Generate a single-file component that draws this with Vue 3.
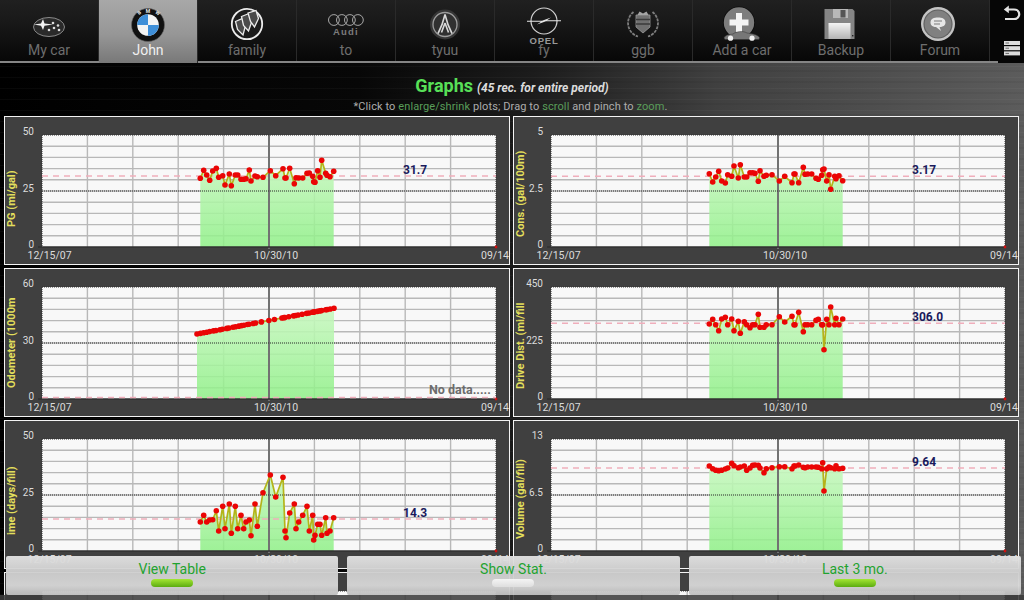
<template>
  <div class="page">
    <div class="topbar">
      <div class="tabs">
        <div v-for="t in tabs" :key="t.id" class="tab" :class="{ active: t.active }">
          <svg class="logo" viewBox="0 0 48 42" width="48" height="42">
            <template v-if="t.id === 'subaru'">
              <ellipse cx="24" cy="27" rx="15.5" ry="9.5" fill="#2a2a2a" stroke="#8a8a8a" stroke-width="1" />
              <path d="M9 24.5 L16 23.5 L18 19 L19.5 23.5 L28 24.5 L19.5 25.8 L18 30 L16 25.8 Z" fill="#f2f2f2" />
              <circle v-for="s in subaruStars" :key="s[0]" :cx="s[0]" :cy="s[1]" r="1.3" fill="#ddd" />
            </template>
            <template v-else-if="t.id === 'bmw'">
              <circle cx="24" cy="25" r="16.5" fill="#111" stroke="#666" stroke-width="0.6" />
              <circle cx="24" cy="25" r="10.8" fill="#f4f4f4" />
              <path d="M24 25 V14.2 A10.8 10.8 0 0 0 13.2 25 Z M24 25 V35.8 A10.8 10.8 0 0 0 34.8 25 Z" fill="#3f8fd8" />
              <text class="bmw" x="15" y="15" transform="rotate(-38 15 15)">B</text>
              <text class="bmw" x="24" y="12.6" text-anchor="middle">M</text>
              <text class="bmw" x="31" y="13" transform="rotate(38 31 13)">W</text>
            </template>
            <template v-else-if="t.id === 'buick'">
              <circle cx="24" cy="24" r="15.2" fill="#1c1c1c" stroke="#ececec" stroke-width="1.8" />
              <path d="M12.5 21.5 L19.5 18.5 L22 27.5 L20 35 L14.5 29.5 Z" fill="#4a4a4a" stroke="#ececec" stroke-width="1.3" />
              <path d="M18.5 16.5 L26 13.5 L28.5 22.5 L25.5 31 L20.5 25.5 Z" fill="#4a4a4a" stroke="#ececec" stroke-width="1.3" />
              <path d="M25 13 L33 10.5 L35.5 18.5 L31.5 27 L27.5 21.5 Z" fill="#4a4a4a" stroke="#ececec" stroke-width="1.3" />
            </template>
            <template v-else-if="t.id === 'audi'">
              <circle v-for="c in [11.9, 19.9, 27.9, 35.9]" :key="c" :cx="c" cy="20" r="5.4" fill="none" stroke="#a8a8a8" stroke-width="1" />
              <text class="audi" x="24" y="35" text-anchor="middle">Audi</text>
            </template>
            <template v-else-if="t.id === 'acura'">
              <circle cx="24" cy="24.5" r="15" fill="#363636" />
              <circle cx="24" cy="24.5" r="12" fill="#303030" stroke="#9c9c9c" stroke-width="1.3" />
              <path d="M24 14.5 C22.5 21 20 28 17 33.5 M24 14.5 C25.5 21 28 28 31 33.5 M24 23 L20.5 32.5 M24 23 L27.5 32.5" fill="none" stroke="#d8d8d8" stroke-width="1.6" />
            </template>
            <template v-else-if="t.id === 'opel'">
              <circle cx="24" cy="21" r="13" fill="none" stroke="#d0d0d0" stroke-width="1.2" />
              <path d="M7 20.8 H22 L31 17.5 L27 20.2 H41 V21.2 H26 L17 24.5 L21 21.8 H7 Z" fill="#e6e6e6" />
              <text class="opel" x="24" y="44" text-anchor="middle">OPEL</text>
            </template>
            <template v-else-if="t.id === 'cadillac'">
              <path d="M14.5 12 A14 14 0 0 0 19 36.5 M33.5 12 A14 14 0 0 1 29 36.5" fill="none" stroke="#7e7e7e" stroke-width="1.8" stroke-dasharray="3 1" />
              <path d="M17 15 H31 V27 L24 33 L17 27 Z" fill="#707070" stroke="#9a9a9a" stroke-width="0.8" />
              <path d="M17 19.5 H31 M17 24 H31" stroke="#3a3a3a" stroke-width="1.4" />
              <path d="M18.5 15 L20.5 11.5 L24 13.5 L27.5 11.5 L29.5 15 Z" fill="#a4a4a4" />
            </template>
            <template v-else-if="t.id === 'add'">
              <circle cx="21" cy="22.5" r="16" fill="#0c0c0c" />
              <circle cx="21" cy="22.5" r="15.2" fill="#7d7d7d" />
              <path d="M18 13 H24 V19.5 H30.5 V25.5 H24 V32 H18 V25.5 H11.5 V19.5 H18 Z" fill="#f4f4f4" />
              <path d="M6 38 C7 35 11 34.5 15 34 C18 31.5 25 30.5 29 33 C33 33.5 39 34 41.5 37.5 L41 39.5 H7 Z" fill="#777" stroke="#333" stroke-width="0.5" />
              <circle cx="12.5" cy="38.2" r="2.6" fill="#f0f0f0" />
              <circle cx="34" cy="38.2" r="2.6" fill="#f0f0f0" />
            </template>
            <template v-else-if="t.id === 'backup'">
              <path d="M7.5 9 H35.5 L37.5 11 V39 H7.5 Z" fill="#858585" />
              <rect x="16" y="9" width="15" height="9" fill="#b8b8b8" />
              <rect x="23.5" y="10" width="5" height="7.5" fill="#555" />
              <rect x="11.5" y="23" width="22" height="16" :fill="'url(#floppy)'" />
              <rect x="35" y="35" width="1.4" height="1.4" fill="#222" />
              <defs>
                <linearGradient id="floppy" x1="0" y1="0" x2="0" y2="1">
                  <stop offset="0" stop-color="#f4f4f4" />
                  <stop offset="1" stop-color="#b4b4b4" />
                </linearGradient>
              </defs>
            </template>
            <template v-else-if="t.id === 'forum'">
              <circle cx="22" cy="24" r="17" fill="#c4c4c4" />
              <circle cx="22" cy="24" r="14.6" fill="#606060" />
              <circle cx="22" cy="24" r="13.4" fill="#808080" />
              <path d="M14.5 22.5 C14.5 18.5 18 17.5 22 17.5 C26 17.5 29.5 18.5 29.5 22.5 C29.5 25.5 27 27 23.5 27 L25 31 L20 27 C17 27 14.5 25.5 14.5 22.5 Z" fill="#e6e6e6" />
              <path d="M18 21 H26 M18 24 H24" stroke="#7b7b7b" stroke-width="1.1" />
            </template>
          </svg>
          <span class="tab-label">{{ t.label }}</span>
        </div>
      </div>
      <div class="sys">
        <svg class="sys-back" viewBox="0 0 18 16" width="18" height="16">
          <path d="M3 4.5 H11 C18 4.5 18 14 11 14 H2" fill="none" stroke="#e2e2e2" stroke-width="2.2" />
          <path d="M5.8 0.5 L0.8 4.5 L5.8 8.2 Z" fill="#e2e2e2" />
        </svg>
        <svg class="sys-menu" viewBox="0 0 18 16" width="18" height="16">
          <rect x="1" y="1" width="16" height="4" fill="#dcdcdc" />
          <rect x="1" y="6.2" width="16" height="4" fill="#dcdcdc" />
          <rect x="1" y="11.4" width="16" height="4" fill="#dcdcdc" />
          <path d="M2.5 3 H6 M2.5 8.2 H6 M2.5 13.4 H6" stroke="#666" stroke-width="1" />
        </svg>
      </div>
    </div>

    <div class="head">
      <div class="title"><span class="title-main">Graphs</span> <span class="title-sub">(45 rec. for entire period)</span></div>
      <div class="hint">*Click to <em>enlarge/shrink</em> plots; Drag to <em>scroll</em> and pinch to <em>zoom</em>.</div>
    </div>

    <div class="charts">
      <div v-for="(c, i) in charts" :key="i" class="card">
        <svg viewBox="0 0 506 149" width="506" height="149" class="plot">
          <defs>
            <linearGradient :id="'area-' + i" x1="0" y1="0" x2="0" y2="1">
              <stop offset="0" stop-color="#caf8c2" stop-opacity="0.9" />
              <stop offset="1" stop-color="#8ef086" stop-opacity="0.85" />
            </linearGradient>
          </defs>
          <rect :x="PX" :y="PY" :width="PW" :height="PH" fill="#f8f8f8" />
          <line v-for="n in 9" :key="'h' + n" :x1="PX" :x2="PX + PW" :y1="PY + n * PH / 10" :y2="PY + n * PH / 10" class="grid" />
          <line v-for="n in 9" :key="'v' + n" :x1="PX + n * PW / 10" :x2="PX + n * PW / 10" :y1="PY" :y2="PY + PH" class="grid" />
          <polygon v-if="c.pts.length" :points="areaOf(c)" :fill="'url(#area-' + i + ')'" />
          <line :x1="PX + PW / 2" :x2="PX + PW / 2" :y1="PY" :y2="PY + PH + 2" class="grid-mid" />
          <line :x1="PX" :x2="PX + PW" :y1="PY + PH / 2" :y2="PY + PH / 2" class="dots" />
          <line :x1="PX" :x2="PX + PW" :y1="PY" :y2="PY" class="dots" />
          <line :x1="PX" :x2="PX" :y1="PY" :y2="PY + PH" class="dots" />
          <line :x1="PX + PW" :x2="PX + PW" :y1="PY" :y2="PY + PH" class="dots" />
          <line :x1="PX - 4" :x2="PX + PW" :y1="PY + PH" :y2="PY + PH" class="base" />
          <circle :cx="PX + PW" :cy="PY + PH" r="1.4" fill="#d01010" />

          <template v-if="c.pts.length">
            <line :x1="PX" :x2="PX + PW" :y1="PY + PH - c.avg" :y2="PY + PH - c.avg" class="avg" />
            <polyline :points="lineOf(c)" class="series" />
            <circle v-for="(p, k) in c.pts" :key="k" :cx="PX + p[0]" :cy="PY + PH - p[1]" r="2.8" fill="#ea0505" />
            <text v-if="c.value" class="value" :x="PX + 361" :y="PY + PH - c.avg - 2.5">{{ c.value }}</text>
            <text v-if="c.noData" class="nodata" x="425" y="126">No data.....</text>
            <text class="ytitle" :transform="`translate(11 ${c.titleY}) rotate(-90)`">{{ c.title }}</text>
            <text class="tick" x="30" :y="PY">{{ c.ticks[0] }}</text>
            <text class="tick" x="30" :y="PY + PH / 2 + 1">{{ c.ticks[1] }}</text>
            <text class="tick" x="30" :y="PY + PH + 1">{{ c.ticks[2] }}</text>
            <text class="date" x="23.5" y="143">12/15/07</text>
            <text class="date" x="250" y="143">10/30/10</text>
            <text class="date" x="477" y="143">09/14</text>
          </template>
        </svg>
      </div>
    </div>

    <div class="shade"></div>
    <div class="actions">
      <div v-for="b in buttons" :key="b.label" class="action">
        <span class="action-label">{{ b.label }}</span>
        <span class="pill" :class="{ on: b.on }"></span>
      </div>
    </div>
  </div>
</template>

<script setup>
// plot box inside a card
const PX = 38
const PY = 19
const PW = 454
const PH = 112

const tabs = [
  { id: 'subaru', label: 'My car' },
  { id: 'bmw', label: 'John', active: true },
  { id: 'buick', label: 'family' },
  { id: 'audi', label: 'to' },
  { id: 'acura', label: 'tyuu' },
  { id: 'opel', label: 'fy' },
  { id: 'cadillac', label: 'ggb' },
  { id: 'add', label: 'Add a car' },
  { id: 'backup', label: 'Backup' },
  { id: 'forum', label: 'Forum' },
]

const subaruStars = [[28, 23], [33, 25.5], [29, 28], [24, 30], [34, 30]]

// fill-up dates, px from the plot's left edge
const xs = [
  158.3, 161.7, 164.7, 167.7, 170.7, 174.3, 176.7, 180.7, 183, 187.3, 189.3, 193.3, 195.7, 199, 201.7,
  204, 207.3, 209, 213, 215.3, 221, 228.3, 233.7, 241, 243, 244, 247.7, 252.3, 254, 256.7,
  260.7, 265, 267.3, 270.7, 271.7, 273, 275.7, 278, 279.7, 283.7, 285, 288, 291.7,
]

const series = (ys) => ys.map((y, k) => [xs[k], y])

const odometer = xs.map((x) => {
  const ox = 155 + (x - 158.3) * 1.027
  return [ox, 65 + (ox - 155) * 0.188]
})

const charts = [
  {
    title: 'PG (mi/gal)', titleY: 111, ticks: ['50', '25', '0'], value: '31.7', avg: 71,
    pts: series([
      68.7, 76.7, 72, 66.7, 76, 78.7, 69.7, 71.3, 62, 73, 61.3, 72, 72, 67.7, 67.7,
      68.3, 77, 66, 71, 70.3, 69.7, 76.3, 71.3, 78.3, 69, 69, 78.7, 63.3, 69.3, 69,
      69, 73.7, 74, 70.7, 65.3, 64.7, 76.3, 69.7, 86.7, 73.7, 71.7, 70.3, 75.7,
    ]),
  },
  {
    title: 'Cons. (gal/100m)', titleY: 121, ticks: ['5', '2.5', '0'], value: '3.17', avg: 70.7,
    pts: series([
      73.3, 65, 70, 75.7, 66, 64, 72.3, 70.7, 81, 69, 82.3, 70, 70, 74.3, 74.3,
      73.7, 65.7, 76.3, 70.7, 71.7, 72.3, 66, 70.7, 64.3, 73, 73, 64.3, 79.7, 72.7, 73,
      73, 68.7, 67.7, 71.7, 77.3, 78, 66, 72.3, 57.7, 70.7, 68.3, 71.3, 66.3,
    ]),
  },
  {
    title: 'Odometer (1000m', titleY: 120, ticks: ['60', '30', '0'], avg: 1.5, noData: true,
    pts: odometer,
  },
  {
    title: 'Drive Dist. (mi/fill', titleY: 121, ticks: ['450', '225', '0'], value: '306.0', avg: 75.7,
    pts: series([
      75, 79.7, 74.3, 68.3, 80, 81.7, 74.3, 80, 68.3, 77.7, 65.7, 77.3, 74.3, 71.3, 74.3,
      74.3, 84.7, 71.7, 71.7, 74.3, 74.3, 82.3, 77, 82.7, 74.3, 74.3, 86.7, 67.3, 74.3, 74.3,
      74.3, 78.7, 79.7, 74.3, 74.3, 49.3, 79.7, 74.3, 92, 74.3, 80.7, 74.3, 80,
    ]),
  },
  {
    title: 'ime (days/fill)', titleY: 115, ticks: ['50', '25', '0'], value: '14.3', avg: 32,
    pts: series([
      29, 35.7, 29, 31, 31.3, 40.3, 20, 44.7, 22.3, 47, 17.7, 44.7, 22.3, 35.7, 22.3,
      29, 31, 15.3, 47, 24.7, 58.3, 76, 54, 73.7, 20, 13.3, 38, 47, 22.3, 29,
      35.7, 44.7, 20, 35.7, 11, 15.7, 26.7, 26.7, 15.7, 33.3, 17.7, 20, 33.3,
    ]),
  },
  {
    title: 'Volume (gal/fill)', titleY: 119, ticks: ['13', '6.5', '0'], value: '9.64', avg: 83,
    pts: series([
      85, 82.3, 80.7, 80.3, 80.7, 82, 83, 87.7, 85.3, 83.3, 84, 85, 80.7, 83, 85.7,
      86, 85.7, 83, 78.3, 82.3, 83.3, 84.3, 84.3, 82.3, 85, 85, 86, 83.7, 83.3, 84,
      84, 84, 83.7, 82.3, 88.3, 60, 82.3, 84, 83.3, 82.3, 85.3, 82.3, 82.7,
    ]),
  },
  // next row, only its top edge shows under the buttons
  { pts: [] },
  { pts: [] },
]

const lineOf = (c) => c.pts.map((p) => `${PX + p[0]},${PY + PH - p[1]}`).join(' ')

const areaOf = (c) => {
  const first = c.pts[0][0]
  const last = c.pts[c.pts.length - 1][0]
  return `${PX + first},${PY + PH} ${lineOf(c)} ${PX + last},${PY + PH}`
}

const buttons = [
  { label: 'View Table', on: true },
  { label: 'Show Stat.', on: false },
  { label: 'Last 3 mo.', on: true },
]
</script>

<style scoped>
.page {
  position: relative;
  width: 1024px;
  height: 600px;
  overflow: hidden;
  font-family: Roboto, "Noto Sans", sans-serif;
  background:
    repeating-linear-gradient(180deg, rgba(255,255,255,0.03) 0 1px, transparent 1px 4px, rgba(0,0,0,0.05) 4px 6px, transparent 6px 11px),
    linear-gradient(90deg, #000 0, #070707 35%, #1c1c1c 52%, #404040 70%, #5c5c5c 100%);
}
.topbar {
  display: flex;
  height: 63px;
  background: #060606;
}
.tabs {
  display: flex;
  width: 998px;
  height: 63px;
  box-sizing: border-box;
  border-bottom: 2px solid #858585;
}
.tab {
  width: 99px;
  height: 61px;
  box-sizing: border-box;
  border-right: 1px solid #2a2a2a;
  display: flex;
  flex-direction: column;
  align-items: center;
  background: linear-gradient(180deg, #202020 0, #1a1a1a 30%, #121212 60%, #070707 100%);
}
.tab.active {
  height: 63px;
  background: linear-gradient(180deg, #a8a8a8 0, #969696 55%, #787878 100%);
}
.logo {
  flex: none;
  overflow: visible;
}
.tab-label {
  height: 16px;
  line-height: 16px;
  font-size: 14px;
  color: #6e6e6e;
}
.tab.active .tab-label {
  color: #f0f0f0;
}
.bmw {
  font-size: 5px;
  font-weight: 700;
  fill: #e8e8e8;
}
.audi {
  font-size: 9.5px;
  font-weight: 700;
  letter-spacing: 1.2px;
  fill: #7c7c7c;
  font-family: "Liberation Sans", sans-serif;
}
.opel {
  font-size: 9.5px;
  font-weight: 700;
  letter-spacing: 0.8px;
  fill: #999;
  font-family: "Liberation Sans", sans-serif;
}
.sys {
  flex: 1;
  display: flex;
  flex-direction: column;
  padding: 5px 0 0 5px;
  gap: 19px;
}
.head {
  height: 53px;
  box-sizing: border-box;
  padding-top: 11px;
  text-align: center;
}
.title {
  height: 24px;
  line-height: 24px;
}
.title-main {
  font-size: 18px;
  font-weight: 700;
  color: #58e058;
}
.title-sub {
  font-size: 12px;
  font-weight: 700;
  font-style: italic;
  color: #dcdcdc;
}
.hint {
  margin-top: 1px;
  height: 16px;
  line-height: 16px;
  font-size: 11px;
  letter-spacing: 0.1px;
  color: #adadad;
  padding-right: 3px;
}
.hint em {
  font-style: normal;
  color: #5a9e5a;
}
.charts {
  display: grid;
  grid-template-columns: 506px 506px;
  grid-auto-rows: 149px;
  gap: 3px;
  padding-left: 4px;
}
.card {
  background: #404040;
  box-shadow: inset 0 0 0 1px #f4f4f4;
}
.plot {
  display: block;
}
.grid {
  stroke: #b8b8b8;
  stroke-width: 1.4;
}
.grid-mid {
  stroke: #727272;
  stroke-width: 2;
}
.dots {
  stroke: #303030;
  stroke-width: 1;
  stroke-dasharray: 1 1;
}
.base {
  stroke: #303030;
  stroke-width: 1.4;
}
.avg {
  stroke: #f0aebb;
  stroke-width: 1.6;
  stroke-dasharray: 6 5;
}
.series {
  fill: none;
  stroke: #b4b41a;
  stroke-width: 1.7;
}
.value {
  font-size: 12px;
  font-weight: 700;
  fill: #1a1a5c;
}
.nodata {
  font-size: 12.5px;
  font-weight: 700;
  fill: #6c6c6c;
}
.ytitle {
  font-size: 11px;
  font-weight: 700;
  fill: #e2de5c;
}
.tick {
  font-size: 10px;
  text-anchor: end;
  fill: #dcdcdc;
}
.date {
  font-size: 10.5px;
  fill: #dcdcdc;
}
/* dimmed strip under the button row */
.shade {
  position: absolute;
  left: 0;
  right: 0;
  bottom: 0;
  height: 5px;
  background: rgba(60, 60, 60, 0.88);
}
.actions {
  position: absolute;
  left: 6px;
  right: 3px;
  bottom: 5px;
  height: 39px;
  display: flex;
  gap: 9px;
}
.action {
  flex: 1;
  display: flex;
  flex-direction: column;
  align-items: center;
  padding-top: 5px;
  box-sizing: border-box;
  border-radius: 2px;
  background: linear-gradient(180deg, rgba(226,226,226,0.96) 0, rgba(206,206,206,0.96) 45%, rgba(214,214,214,0.96) 75%, rgba(190,190,190,0.96) 100%);
}
.action-label {
  height: 17px;
  line-height: 17px;
  font-size: 14px;
  color: #1fa32f;
}
.pill {
  margin-top: 1px;
  width: 42px;
  height: 8px;
  border-radius: 4px;
  background: linear-gradient(180deg, #f4f4f4, #dedede);
}
.pill.on {
  background: linear-gradient(180deg, #a4e634, #5cac10);
}
</style>
